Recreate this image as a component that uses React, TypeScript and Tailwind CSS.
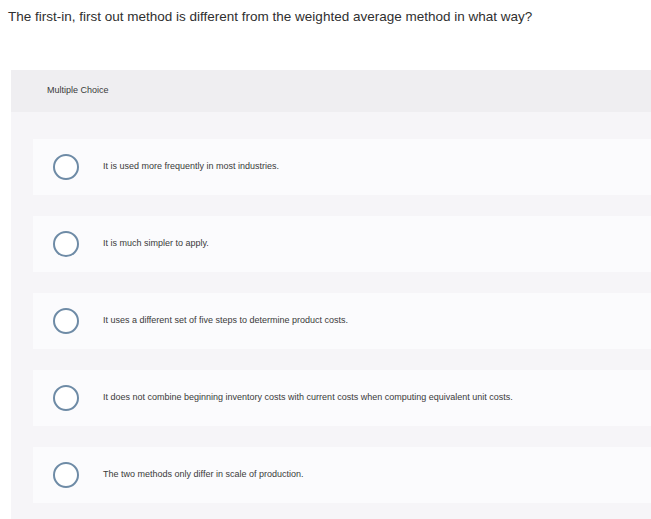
const OPTIONS = [
  "It is used more frequently in most industries.",
  "It is much simpler to apply.",
  "It uses a different set of five steps to determine product costs.",
  "It does not combine beginning inventory costs with current costs when computing equivalent unit costs.",
  "The two methods only differ in scale of production.",
];

export default function App() {
  return (
    <div className="h-[519px] w-full overflow-hidden bg-white font-['Liberation_Sans',Arial,sans-serif] text-[#333]">
      <p className="pl-2 pt-[9px] text-[13.5px] leading-4 text-[#2f2f2f]">
        The first-in, first out method is different from the weighted average method in what way?
      </p>

      <div className="ml-[11px] mt-[45px]">
        {/* header band */}
        <div className="flex h-[42px] items-center bg-[#efeef1] pl-[36px] text-[9px] text-[#3a3a3a]">
          Multiple Choice
        </div>

        {/* answer list */}
        <div className="flex flex-col gap-[21px] bg-[#f6f5f8] pb-6 pl-[22px] pt-[27px]">
          {OPTIONS.map((o) => (
            <label
              key={o}
              className="flex h-[56px] cursor-pointer items-center gap-[24px] bg-[#fbfbfd] pl-[20px]"
            >
              <span className="h-[26px] w-[26px] shrink-0 rounded-full border-2 border-[#6e8ba6] bg-white" />
              <span className="text-[9px] text-[#3a3a3a]">{o}</span>
            </label>
          ))}
        </div>
      </div>
    </div>
  );
}
